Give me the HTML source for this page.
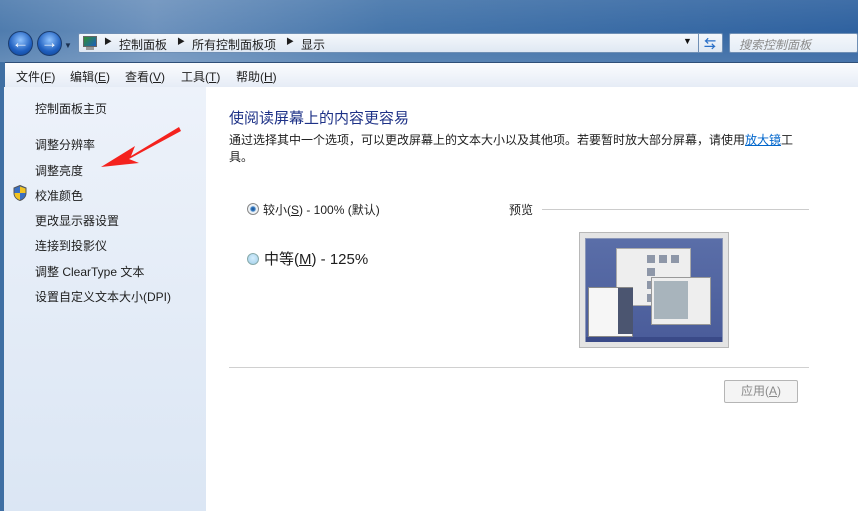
<!DOCTYPE html>
<html><head><meta charset="utf-8"><style>
*{margin:0;padding:0;box-sizing:border-box}
body{width:858px;height:511px;overflow:hidden;position:relative;font-family:"Liberation Sans","Noto Sans CJK SC",sans-serif;font-size:12px;color:#1e1e1e;background:#3f6fa3}
.abs{position:absolute}
#top{left:0;top:0;width:858px;height:62px;background:linear-gradient(90deg,#4f7cae 0,#6d92bd 18%,#4676ab 45%,#2f62a0 100%)}
#top2{left:0;top:0;width:858px;height:62px;background:linear-gradient(180deg,rgba(255,255,255,.08),rgba(255,255,255,0) 50%,rgba(255,255,255,.12))}
.nav{width:25px;height:25px;border-radius:50%;background:radial-gradient(circle at 50% 35%,#8fc3ff,#1f5fbf 60%,#0c3f8e);border:1px solid #1b3d70;top:31px;color:#fff;font-size:17px;font-weight:bold;text-align:center;line-height:22px}
#addr{left:78px;top:33px;width:645px;height:20px;background:linear-gradient(#f4f7fb,#dfe8f3);border:1px solid #6f8fb5;border-radius:2px}
#search{left:729px;top:33px;width:129px;height:20px;background:linear-gradient(#f4f7fb,#e5edf6);border:1px solid #6f8fb5;border-radius:2px;color:#8a8a8a;font-style:italic;padding:2px 0 0 9px}
#menu{left:5px;top:62px;width:853px;height:25px;background:linear-gradient(#fbfcfe,#e6ecf6);border-top:1px solid #2f4f78}
#menu span{position:absolute;top:5px}
#left{left:4px;top:87px;width:202px;height:424px;background:linear-gradient(180deg,#edf2fa,#dbe6f4)}
#left div{position:absolute;left:31px}
#main{left:206px;top:87px;width:652px;height:424px;background:#fff}
.sq{position:absolute;width:8px;height:8px;background:#8e97a8}
</style></head><body>
<div id="top" class="abs"></div><div id="top2" class="abs"></div>
<div class="abs nav" style="left:8px">&#8592;</div>
<div class="abs nav" style="left:37px">&#8594;</div>
<div class="abs" style="left:64px;top:41px;font-size:8px;color:#1a3050">&#9660;</div>
<div id="addr" class="abs">
 <div class="abs" style="left:4px;top:2px;width:14px;height:11px;background:linear-gradient(135deg,#2f8f2f,#1c5fbf);border:1px solid #666"></div>
 <div class="abs" style="left:7px;top:13px;width:8px;height:3px;background:#999"></div>
 <span class="abs" style="left:25px;top:2px;font-size:8px">&#9654;</span>
 <span class="abs" style="left:40px;top:2px">控制面板</span>
 <span class="abs" style="left:98px;top:2px;font-size:8px">&#9654;</span>
 <span class="abs" style="left:113px;top:2px">所有控制面板项</span>
 <span class="abs" style="left:207px;top:2px;font-size:8px">&#9654;</span>
 <span class="abs" style="left:222px;top:2px">显示</span>
 <span class="abs" style="left:604px;top:2px;font-size:9px;color:#111">&#9660;</span>
 <div class="abs" style="left:619px;top:0;width:1px;height:18px;background:#6f8fb5"></div>
 <span class="abs" style="left:625px;top:1px;color:#2a70c8;font-size:12px;font-weight:bold">&#8646;</span>
</div>
<div id="search" class="abs">搜索控制面板</div>
<div id="menu" class="abs">
 <span style="left:11px">文件(<u>F</u>)</span><span style="left:65px">编辑(<u>E</u>)</span><span style="left:120px">查看(<u>V</u>)</span><span style="left:176px">工具(<u>T</u>)</span><span style="left:231px">帮助(<u>H</u>)</span>
</div>
<div id="left" class="abs">
 <div style="top:13px">控制面板主页</div>
 <div style="top:49px">调整分辨率</div>
 <div style="top:75px">调整亮度</div>
 <div style="top:100px">校准颜色</div>
 <div style="top:125px">更改显示器设置</div>
 <div style="top:150px">连接到投影仪</div>
 <div style="top:176px">调整 ClearType 文本</div>
 <div style="top:201px">设置自定义文本大小(DPI)</div>
 <svg class="abs" style="left:9px;top:98px" width="14" height="16" viewBox="0 0 14 16"><path d="M7 0.5 L13 3 V8 C13 12 10 14.5 7 15.5 C4 14.5 1 12 1 8 V3 Z" fill="#3a6fc2" stroke="#555"/><path d="M7 1.5 V8 H12.5 V3.5 Z" fill="#f2c320"/><path d="M7 8 V15 C4 14 1.5 12 1.5 8 Z" fill="#f2c320"/></svg>
</div>
<svg class="abs" style="left:95px;top:122px" width="90" height="50"><path d="M84 5 L36 34 L40 24 L6 45 L44 41 L34 37 L86 9 Z" fill="#f4221e"/></svg>
<div id="main" class="abs">
 <div class="abs" style="left:23px;top:20px;font-size:15px;color:#1e3287">使阅读屏幕上的内容更容易</div>
 <div class="abs" style="left:23px;top:45px;width:578px;line-height:17px">通过选择其中一个选项，可以更改屏幕上的文本大小以及其他项。若要暂时放大部分屏幕，请使用<span style="color:#0066cc;text-decoration:underline">放大镜</span>工具。</div>
 <div class="abs" style="left:41px;top:116px;width:12px;height:12px;border-radius:50%;border:1px solid #888;background:radial-gradient(circle,#1a4c8c 0,#3a7fc4 30%,#e8eef4 45%,#fff 100%)"></div>
 <div class="abs" style="left:57px;top:114px">较小(<u>S</u>) - 100% (默认)</div>
 <div class="abs" style="left:41px;top:166px;width:12px;height:12px;border-radius:50%;border:1px solid #8aa;background:radial-gradient(circle at 50% 40%,#d5eefd,#9fcde8)"></div>
 <div class="abs" style="left:58px;top:161px;font-size:15px">中等(<u>M</u>) - 125%</div>
 <div class="abs" style="left:303px;top:114px">预览</div>
 <div class="abs" style="left:336px;top:122px;width:267px;height:1px;background:#ccc"></div>
 <div class="abs" style="left:373px;top:145px;width:150px;height:116px;background:#e4e4e4;border:1px solid #b8b8b8">
  <div class="abs" style="left:5px;top:5px;width:138px;height:104px;background:linear-gradient(#5a6ea8,#4a5c9a);border:1px solid #8a96b8">
   <div class="abs" style="left:30px;top:9px;width:75px;height:58px;background:#eee;border:1px solid #aaa">
    <div class="sq" style="left:30px;top:6px"></div><div class="sq" style="left:42px;top:6px"></div><div class="sq" style="left:54px;top:6px"></div>
    <div class="sq" style="left:30px;top:19px"></div><div class="sq" style="left:30px;top:32px"></div><div class="sq" style="left:30px;top:45px"></div>
   </div>
   <div class="abs" style="left:65px;top:38px;width:60px;height:48px;background:#eee;border:1px solid #999"><div class="abs" style="left:2px;top:3px;width:34px;height:38px;background:#a8b4bc"></div></div>
   <div class="abs" style="left:2px;top:48px;width:45px;height:50px;background:#f6f6f6;border:1px solid #888"><div class="abs" style="left:29px;top:0;width:15px;height:46px;background:#4b5570"></div></div>
   <div class="abs" style="left:0;top:98px;width:136px;height:5px;background:#3a4a88"></div>
  </div>
 </div>
 <div class="abs" style="left:23px;top:280px;width:580px;height:1px;background:#d0d0d0"></div>
 <div class="abs" style="left:518px;top:293px;width:74px;height:23px;border:1px solid #b5b5b5;border-radius:2px;background:#f4f4f4;color:#8a8a8a;text-align:center;line-height:21px">应用(<u>A</u>)</div>
</div>
</body></html>
